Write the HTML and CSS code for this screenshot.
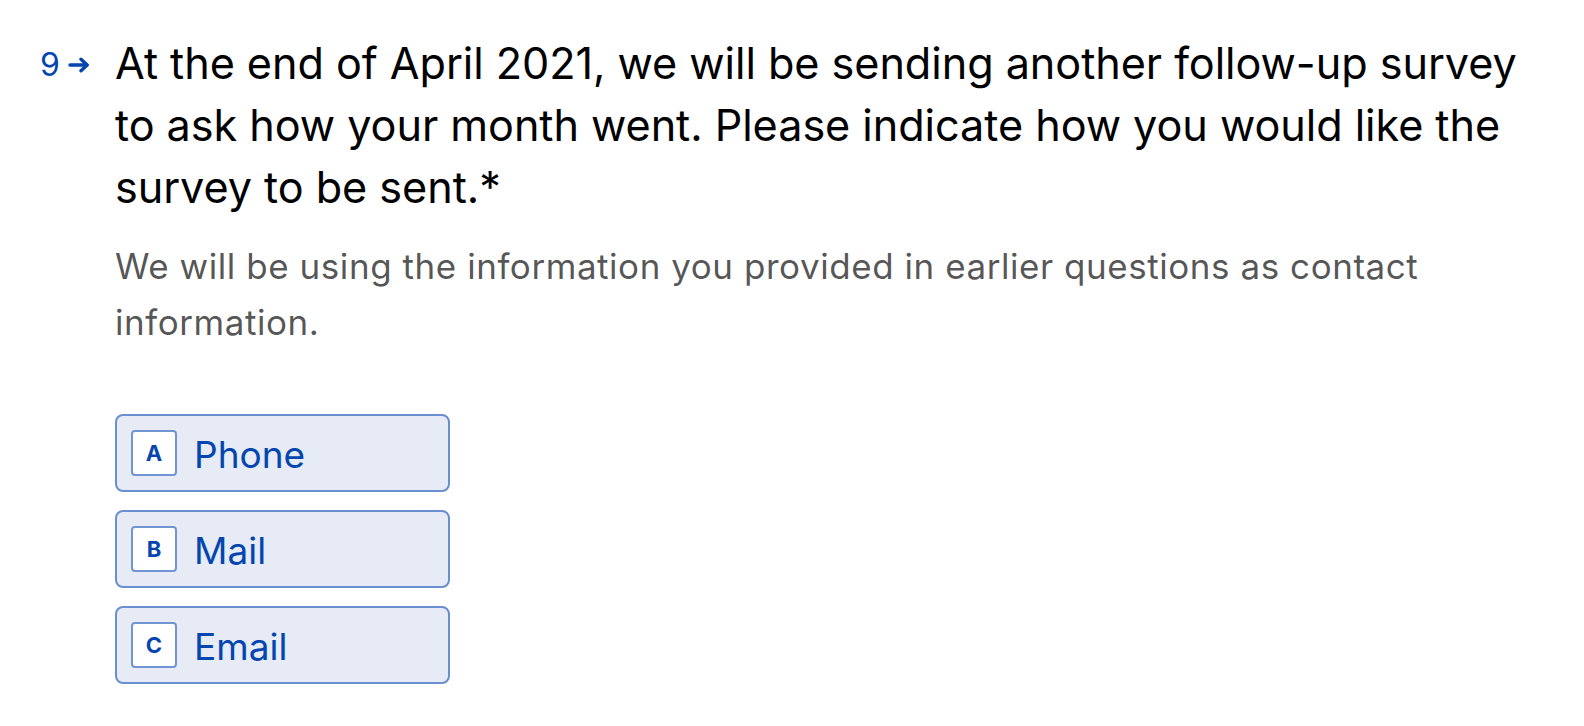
FILE: index.html
```html
<!DOCTYPE html>
<html lang="en">
<head>
<meta charset="utf-8">
<title>Question 9</title>
<link rel="stylesheet" href="styles.css">
</head>
<body>
<main class="page">
  <section class="question">
    <div class="qnum">
      <span class="qnum-digit">9</span>
      <svg class="qnum-arrow" width="22" height="16" viewBox="0 0 22 16" aria-hidden="true">
        <path d="M2 8 H19 M13 2.2 L19.2 8 L13 13.8" fill="none" stroke="#0445af" stroke-width="3.4" stroke-linecap="round" stroke-linejoin="round"/>
      </svg>
    </div>
    <div class="qbody">
      <h1 class="qtitle">At the end of April 2021, we will be sending another follow-up survey to ask how your month went. Please indicate how you would like the survey to be sent.*</h1>
      <p class="qdesc">We will be using the information you provided in earlier questions as contact information.</p>
      <ul class="choices">
        <li class="choice"><span class="key">A</span><span class="label">Phone</span></li>
        <li class="choice"><span class="key">B</span><span class="label">Mail</span></li>
        <li class="choice"><span class="key">C</span><span class="label">Email</span></li>
      </ul>
    </div>
  </section>
</main>
</body>
</html>
```

FILE: styles.css
```css
html, body {
  margin: 0;
  padding: 0;
  background: #ffffff;
}

body {
  font-family: Inter, "Liberation Sans", Arial, sans-serif;
  color: #000000;
}

.page {
  padding: 32px 0 0 40px;
}

.question {
  display: flex;
  align-items: flex-start;
}

.qnum {
  width: 75px;
  flex: 0 0 75px;
  display: flex;
  align-items: center;
  gap: 8px;
  height: 62px;
  color: #0445af;
  box-sizing: border-box;
}

.qnum-digit {
  font-size: 32px;
  line-height: 1;
  margin-top: 4px;
}

.qnum-arrow {
  display: block;
  margin-top: 4px;
}

.qbody {
  flex: 1;
  max-width: 1440px;
}

.qtitle {
  margin: 0;
  font-size: 43.2px;
  font-weight: 400;
  line-height: 62px;
  letter-spacing: -0.05px;
  color: #000000;
  width: 1440px;
}

.qdesc {
  margin: 21px 0 0 0;
  font-size: 35px;
  line-height: 55.5px;
  letter-spacing: 0.55px;
  color: rgba(0, 0, 0, 0.68);
  width: 1360px;
}

.choices {
  list-style: none;
  margin: 64px 0 0 0;
  padding: 0;
  display: flex;
  flex-direction: column;
  gap: 18px;
}

.choice {
  box-sizing: border-box;
  width: 335px;
  height: 78px;
  display: flex;
  align-items: center;
  gap: 17px;
  padding: 0 14px;
  border: 2px solid #6a8fd0;
  border-radius: 8px;
  background: #e6ebf6;
  color: #0445af;
}

.key {
  box-sizing: border-box;
  width: 46px;
  height: 46px;
  display: flex;
  align-items: center;
  justify-content: center;
  background: #ffffff;
  border: 2px solid #7195d3;
  border-radius: 4px;
  font-size: 22px;
  font-weight: 700;
  color: #0445af;
}

.label {
  font-size: 37px;
  line-height: 1;
  padding-top: 2px;
}
```
